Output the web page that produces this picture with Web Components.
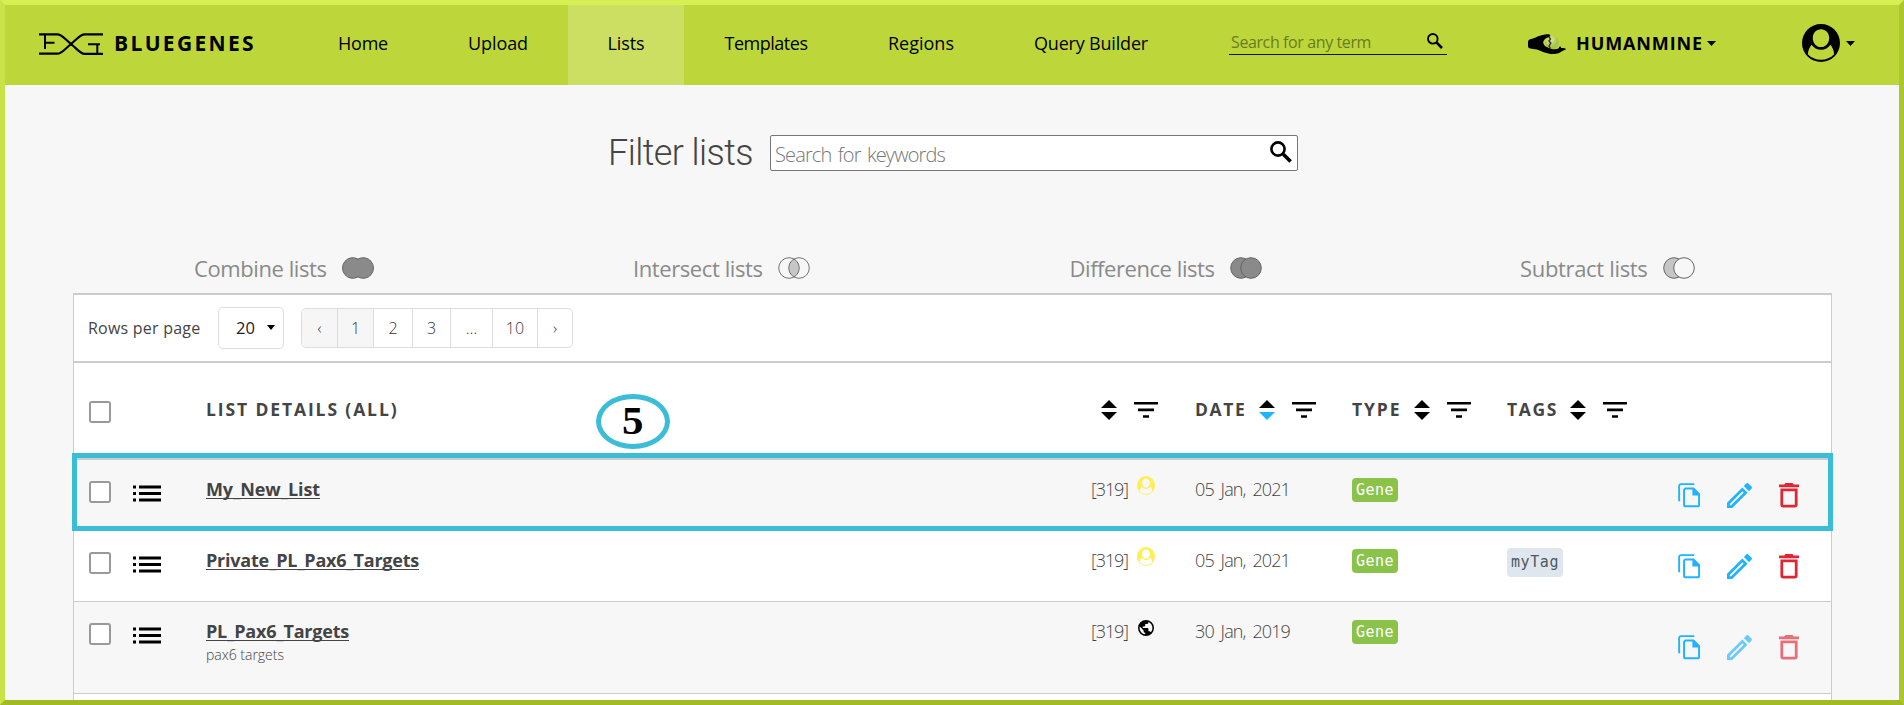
<!DOCTYPE html>
<html lang="en">
<head>
<meta charset="utf-8">
<title>BlueGenes – Lists</title>
<style>
html,body{margin:0;padding:0;height:705px;overflow:hidden;background:#f7f7f7}
body{font-family:"Open Sans","Noto Sans",sans-serif;color:#444}
</style>
</head>
<body>
<bg-app></bg-app>
<script>
const make = (name, html, after) => customElements.define(name, class extends HTMLElement {
  connectedCallback() {
    if (this.shadowRoot) return;
    const t = document.createElement('template');
    t.innerHTML = typeof html === 'function' ? html(this) : html;
    this.attachShadow({mode: 'open'}).appendChild(t.content.cloneNode(true));
    if (after) after(this);
  }
});

/* Text tracked to a fixed measure (w, px) */
make('bg-text', '<style>:host{display:inline-block;white-space:nowrap;line-height:1.4}</style><slot></slot>', el => {
  const w = +el.getAttribute('w');
  if (!w) return;
  const n = el.textContent.length;
  const natural = el.getBoundingClientRect().width;
  el.style.letterSpacing = ((w - natural) / n).toFixed(3) + 'px';
  el.style.width = w + 'px';
});

const person = `<path fill-rule="evenodd" d="M19 0a19 19 0 1 0 0 38a19 19 0 1 0 0-38zM19 5.2c4.800 0 8.200 3.700 8.200 8.700s-3.400 9.100-8.200 9.100s-8.200-4.100-8.200-9.100s3.400-8.700 8.200-8.700zM9.600 20.800c2 3 5.500 5 9.400 5s7.400-2 9.400-5c2.100 2.400 3.700 6.200 3.700 9.500c-3.300 3.600-8 5.500-13.100 5.500s-9.800-1.900-13.100-5.500c0-3.300 1.600-7.100 3.700-9.500z"/>`;
const icons = {
  logo: ['0 0 64 22', `<g fill="none" stroke="currentColor" stroke-width="2.200"><path d="M0 1.300h18.500c4 0 6 3.500 13.500 9.700s9.500 9.800 13.500 9.800H64M0 20.700h18.500c4 0 6-3.500 13.500-9.700S41.500 1.300 45.500 1.300H64"/><path d="M6 2v14M6 9.700h9.500M49 11.200h12M58.300 11v9" stroke-width="2"/></g>`],
  search: ['0 0 22 22', `<g fill="none" stroke="currentColor"><circle cx="8" cy="8" r="6.600" stroke-width="2.600"/><path d="M13.300 13.300l7.300 7.300" stroke-width="3.600"/></g>`],
  hand: ['0 0 38 20', `<defs><radialGradient id="g" cx=".4" cy=".3"><stop offset="0" stop-color="#dfeb9e"/><stop offset="1" stop-color="#aac541"/></radialGradient></defs><circle cx="24" cy="8.500" r="7" fill="url(#g)"/><path d="M0 8c0-1.800 1.600-2.800 4-3.200C8 3.500 12 .8 17 .4c2-.2 4-.4 4.600.2c.9.800 1 1.800 0 2.200c-3.600 1-6.500 3.200-6.300 6.200c.3 3 4.500 4.800 8.500 6c2.500.7 5 .4 7-.8c.2-1.500 1-2.200 1.900-1.500l.6 1.400c1.800-.2 4 .2 4.500.8c.6.900-2.200 1.300-3.600 2.200c-2.200 1.800-5 3.100-9.200 3c-6.500 0-11-2.600-16-4.500C3.500 14.700 0 15 0 12z"/><path d="M20.500 2.500l2 2.500-1.500 2 1.800 2-1.800 3 1.500 2.500" stroke="#333" fill="none" stroke-width="1.400"/>`],
  person: ['0 0 38 38', person],
  caret: ['0 0 10 5', `<path d="M0 0h10L5 5z"/>`],
  sort: ['0 0 16 20', `<path d="M8 0l8 8H0z"/><path d="M8 20l8-8H0z" fill="var(--down,currentColor)"/>`],
  filter: ['0 0 24 16', `<path d="M0 0h24v2.600H0zM4 6.600h16v2.600H4zM9 13.200h6v2.600H9z"/>`],
  list: ['0 0 28 17', `<path d="M0 .6h3v3H0zM0 7h3v3H0zM0 13.500h3v3H0zM6 .6h22v3H6zM6 7h22v3H6zM6 13.500h22v3H6z"/>`],
  globe: ['2 2 20 20', `<path d="M17.900 17.390C17.640 16.590 16.890 16 16 16h-1v-3a1 1 0 0 0-1-1H8v-2h2a1 1 0 0 0 1-1V7h2a2 2 0 0 0 2-2v-.41c2.930 1.180 5 4.050 5 7.410c0 2.080-.8 3.970-2.100 5.390M11 19.930C7.050 19.440 4 16.080 4 12c0-.62.080-1.220.21-1.790L9 15v1a2 2 0 0 0 2 2m1-16A10 10 0 1 0 12 22A10 10 0 1 0 12 2z"/>`],
  copy: ['0 0 24 26', `<path fill="none" stroke="currentColor" stroke-width="2" d="M1.200 19V3.200a2 2 0 0 1 2-2H17M8 5.800h8l6 6V22.500a1.700 1.700 0 0 1-1.700 1.700H8a1.700 1.700 0 0 1-1.700-1.700v-15A1.700 1.700 0 0 1 8 5.800z"/><path d="M15 5h1.500l6.500 6.500V13h-8z"/>`],
  pencil: ['3 3 18.010 18.010', `<path d="M14.060 9.020l.92.920L5.920 19H5v-.92l9.060-9.060M17.660 3c-.25 0-.51.100-.7.290l-1.830 1.830l3.750 3.750l1.830-1.830c.39-.39.390-1.040 0-1.410l-2.340-2.340c-.2-.2-.45-.29-.71-.29m-3.600 3.190L3 17.250V21h3.750L17.810 9.940l-3.750-3.750z"/>`],
  trash: ['0 0 20 26', `<path fill-rule="evenodd" d="M0 1.500h5.300L6.500 0h7l1.200 1.500H20v2.800H0zM1.400 5.800h17.200v16.900a2.700 2.700 0 0 1-2.700 2.700H4.100a2.700 2.700 0 0 1-2.700-2.700zM4.200 8.600v14h11.600v-14z"/>`],
  union: ['0 0 32 22', `<path fill="#8a8a8a" stroke="#666" d="M16 2.100A10.300 10.300 0 1 0 16 19.900A10.300 10.300 0 1 0 16 2.100z"/>`],
  intersect: ['0 0 32 22', `<path fill="#c6c6c6" d="M16 2a10.300 10.300 0 0 1 0 18a10.300 10.300 0 0 1 0-18z"/><g stroke="#666" stroke-width=".9"><circle cx="11" cy="11" r="10.300" fill="none"/><circle cx="21" cy="11" r="10.300" fill="none"/></g>`],
  difference: ['0 0 32 22', `<g stroke="#666" fill="#8a8a8a"><circle cx="11" cy="11" r="10.300"/><circle cx="21" cy="11" r="10.300"/></g>`],
  subtract: ['0 0 32 22', `<g stroke="#666"><circle cx="11" cy="11" r="10.300" fill="#c6c6c6"/><circle cx="21" cy="11" r="10.300" fill="#f7f7f7"/></g>`]
};
make('bg-icon', el => {
  const [vb, body] = icons[el.getAttribute('name')];
  const [w, h] = el.getAttribute('size').split('x');
  return `<style>:host{display:block;flex:none;width:${w}px;height:${h}px}svg{display:block;overflow:visible}</style>
  <svg width="${w}" height="${h}" viewBox="${vb}" preserveAspectRatio="none" fill="currentColor">${body}</svg>`;
});

make('nav-item', el => `<style>
:host{display:flex;align-items:center;justify-content:center;height:77px;padding-bottom:3px;width:${el.getAttribute('box')}px;color:#000;font-size:18px;font-weight:500}
:host([active]){background:#ccdf63}</style><bg-text w="${el.getAttribute('w')}">${el.textContent}</bg-text>`);

make('bg-header', `<style>
:host{display:flex;height:80px;background:#bdd73b;color:#000;align-items:flex-start}
.brand{display:flex;align-items:center;height:78px;width:259px;padding-left:34px;gap:11px;font-weight:700;font-size:21px}
.search{display:flex;justify-content:space-between;width:214px;height:24px;margin:25px 0 0 41px;padding:0 2px 0 2px;border-bottom:1px solid #111;font-size:16px;color:#6c7b20}
.search bg-text{margin-top:1px}
.search bg-icon{color:#000;margin:3px 2px 0 0}
.mine{display:flex;align-items:center;height:78px;margin-left:81px;font-size:18px;font-weight:700}
.user{display:flex;align-items:center;height:76px;margin-left:86px;gap:6px}
</style>
<div class="brand"><bg-icon name="logo" size="64x22"></bg-icon><bg-text w="142">BLUEGENES</bg-text></div>
<nav-item box="130" w="50">Home</nav-item><nav-item box="140" w="60">Upload</nav-item><nav-item box="116" w="37" active>Lists</nav-item><nav-item box="164" w="83">Templates</nav-item><nav-item box="146" w="66">Regions</nav-item><nav-item box="194" w="114">Query Builder</nav-item>
<div class="search"><bg-text w="140">Search for any term</bg-text><bg-icon name="search" size="16x16"></bg-icon></div>
<div class="mine"><bg-icon name="hand" size="38x20"></bg-icon><bg-text w="127" style="margin-left:10px">HUMANMINE</bg-text><bg-icon name="caret" size="9x5" style="margin:-2px 0 0 4px"></bg-icon></div>
<div class="user"><bg-icon name="person" size="38x38"></bg-icon><bg-icon name="caret" size="9x5"></bg-icon></div>`);

make('filter-bar', `<style>
:host{display:flex;padding:50px 0 0 603px;height:36px}
.t{font:300 36px/36px Roboto,sans-serif;color:#444;width:162px}
.box{display:flex;justify-content:space-between;box-sizing:border-box;width:528px;height:36px;border:1px solid #767676;border-radius:2px;background:#fff;padding:4px 5px 0 4px;font-size:20px;font-weight:300;color:#777;word-spacing:2px}
bg-text{line-height:30px}.box bg-icon{color:#000;margin-top:1px}
</style><div class="t"><bg-text w="145" style="line-height:36px">Filter lists</bg-text></div>
<div class="box"><bg-text w="170">Search for keywords</bg-text><bg-icon name="search" size="22x22"></bg-icon></div>`);

make('set-op', el => `<style>:host{display:flex;font-size:22px;color:#8a8a8a;gap:15px;width:${el.getAttribute('box')}px;flex:none}
bg-text{line-height:30px;margin-top:-1px}bg-icon{margin-top:3px}</style>
<bg-text w="${el.getAttribute('w')}">${el.textContent}</bg-text><bg-icon name="${el.getAttribute('icon')}" size="32x22"></bg-icon>`);

make('set-ops', `<style>:host{display:flex;padding:83px 0 0 189px;height:39px}</style>
<set-op box="439" w="132.500" icon="union">Combine lists</set-op><set-op box="436.500" w="129.500" icon="intersect">Intersect lists</set-op><set-op box="450.500" w="145" icon="difference">Difference lists</set-op><set-op box="200" w="127.500" icon="subtract">Subtract lists</set-op>`);

make('bg-check', '<style>:host{display:block;box-sizing:border-box;width:22px;height:22px;border:2px solid #999;border-radius:3px;background:#fff}</style>');

make('bg-pager', `<style>
:host{display:flex;align-items:center;height:66px;border-bottom:2px solid #ccc;font-size:16px;padding-left:14px}
.sel{display:flex;align-items:center;box-sizing:border-box;height:42px;width:66px;border:1px solid #ddd;border-radius:5px;margin-left:17px;padding-left:17px;font-size:16.500px;color:#222}
.sel bg-icon{color:#000;margin:-2px 0 0 12px}
.pages{display:flex;margin-left:17px;height:38px;border:1px solid #ddd;border-radius:5px;overflow:hidden;font-weight:300;color:#333}
.pages span{box-sizing:border-box;display:flex;align-items:center;justify-content:center;border-left:1px solid #ddd}
.pages span:first-child{border-left:0}.off{background:#f6f6f6}
</style><bg-text w="112.500">Rows per page</bg-text>
<div class="sel" style="margin-left:17.500px"><bg-text w="19">20</bg-text><bg-icon name="caret" size="8x5"></bg-icon></div>
<div class="pages"><span class="off" style="width:35px">‹</span><span class="off" style="width:36px">1</span><span style="width:39px">2</span><span style="width:38px">3</span><span style="width:42px">...</span><span style="width:45px">10</span><span style="width:35px">›</span></div>`);

const grid = 'display:grid;grid-template-columns:44px 73px 886px 45px 58px 157px 155px 171px 1fr;padding-left:15px;box-sizing:border-box;position:relative;';

make('col-head', el => `<style>:host{display:flex;align-items:center;height:26px;font-size:17.500px;font-weight:700;color:#444}
bg-icon{color:#000}.s{margin-right:17px}bg-text{margin-right:12px}</style>
${el.textContent ? `<bg-text w="${el.getAttribute('w')}">${el.textContent}</bg-text>` : ''}<bg-icon class="s" name="sort" size="16x20"></bg-icon><bg-icon name="filter" size="24x16"></bg-icon>`);

make('list-head', `<style>:host{${grid}height:97px;border-bottom:2px solid #ccc;background:#fff}
bg-check{margin-top:38px}
.n{grid-column:3;font-size:17.500px;font-weight:700;padding-top:34px}
col-head{padding-top:33.500px}.c{grid-column:4/6;padding-left:9px}
.step{position:absolute;left:522px;top:31px;width:64px;height:45px;border:5px solid #3cbdd7;border-radius:50%;background:#fff;color:#000;font:700 39px/44px "Liberation Serif",serif;text-align:center}
.step span{display:inline-block;transform:scaleX(1.100)}
</style><bg-check></bg-check><div class="n"><bg-text w="192.500">LIST DETAILS (ALL)</bg-text></div>
<col-head class="c"></col-head><col-head w="51.500" style="--down:#20b3ff">DATE</col-head><col-head w="49.500">TYPE</col-head><col-head w="51">TAGS</col-head>
<div class="step"><span>5</span></div>`);

make('list-row', el => {
  const a = n => el.getAttribute(n);
  return `<style>
:host{${grid}height:71px;border-bottom:1px solid #ccc;background:#fff}
:host([odd]){background:#f7f7f7}:host([tall]){height:92px}
:host([marked])::after{content:"";position:absolute;box-sizing:border-box;top:-7px;bottom:-1px;left:-2px;right:-2px;border:5px solid #3cbdd7;z-index:2}
bg-check{margin-top:21px}.li{color:#000;margin-top:25px}
.name{display:flex;flex-direction:column;align-items:flex-start;padding-top:17px;font-size:18px;font-weight:700}
.name u{text-underline-offset:2px;text-decoration-thickness:1px;text-decoration-skip-ink:none}
.d{font-size:14px;font-weight:300;margin-top:1px}
.l{padding-top:17px;font-size:18px;font-weight:300;color:#444}
.date{word-spacing:3px}.num{margin-left:-1px}
.v{margin-top:16px;color:#ffee58}.v.pub{color:#000;margin:18px 0 0 1px}
.gene{justify-self:start;margin-top:18px;height:24px;padding:0 4px;background:#8bc34a;color:#fff;border-radius:4px;font:15px/25px "DejaVu Sans Mono",monospace}
.tag{margin-top:17px;height:29px;padding:0 4px;background:#dfe6ed;color:#4b5a66;border-radius:4px;font:15px/28px "DejaVu Sans Mono",monospace}
.gene bg-text,.tag bg-text{line-height:inherit}
.act{display:flex;align-self:center}
.act{color:#20b3ff}
.dim{opacity:.65}
</style>
<bg-check></bg-check><bg-icon class="li" name="list" size="28x17"></bg-icon>
<div class="name"><bg-text w="${a('w')}"><u>${a('name')}</u></bg-text>${a('note') ? `<bg-text class="d" w="78">${a('note')}</bg-text>` : ''}</div>
<div class="l num"><bg-text w="37">[319]</bg-text></div>
${a('public') === null ? '<bg-icon class="v" name="person" size="18x19"></bg-icon>' : '<bg-icon class="v pub" name="globe" size="16x16"></bg-icon>'}
<div class="l date"><bg-text w="95">${a('date')}</bg-text></div>
<div class="gene"><bg-text w="38">Gene</bg-text></div>
<div>${a('tag') ? `<div class="tag" style="display:inline-block"><bg-text w="48">${a('tag')}</bg-text></div>` : ''}</div>
<div class="act"><bg-icon name="copy" size="23x25"></bg-icon><bg-icon name="pencil" size="25x25" style="margin-left:26px" ${a('public') !== null ? 'class="dim"' : ''}></bg-icon><bg-icon name="trash" size="20x25" style="margin-left:27px;color:#dd2735" ${a('public') !== null ? 'class="dim"' : ''}></bg-icon></div>`;
});

make('list-table', '<style>:host{display:block;margin:0 67px 0 68px;border:1px solid #ccc;border-top-width:2px;border-bottom:0;background:#fff;height:420px}</style><slot></slot>');

make('bg-app', `<style>
:host{display:block;box-sizing:border-box;width:1904px;height:705px;overflow:hidden;background:#f7f7f7;border:5px solid;border-color:#d6ef53 #abc72d #a3bb22 #c8e248}
</style><bg-header></bg-header><filter-bar></filter-bar><set-ops></set-ops>
<list-table><bg-pager></bg-pager><list-head></list-head>
<list-row odd marked name="My_New_List" w="114" date="05 Jan, 2021"></list-row>
<list-row name="Private_PL_Pax6_Targets" w="213" date="05 Jan, 2021" tag="myTag"></list-row>
<list-row odd tall public name="PL_Pax6_Targets" w="143" note="pax6 targets" date="30 Jan, 2019"></list-row>
</list-table>`);
</script>
</body>
</html>
